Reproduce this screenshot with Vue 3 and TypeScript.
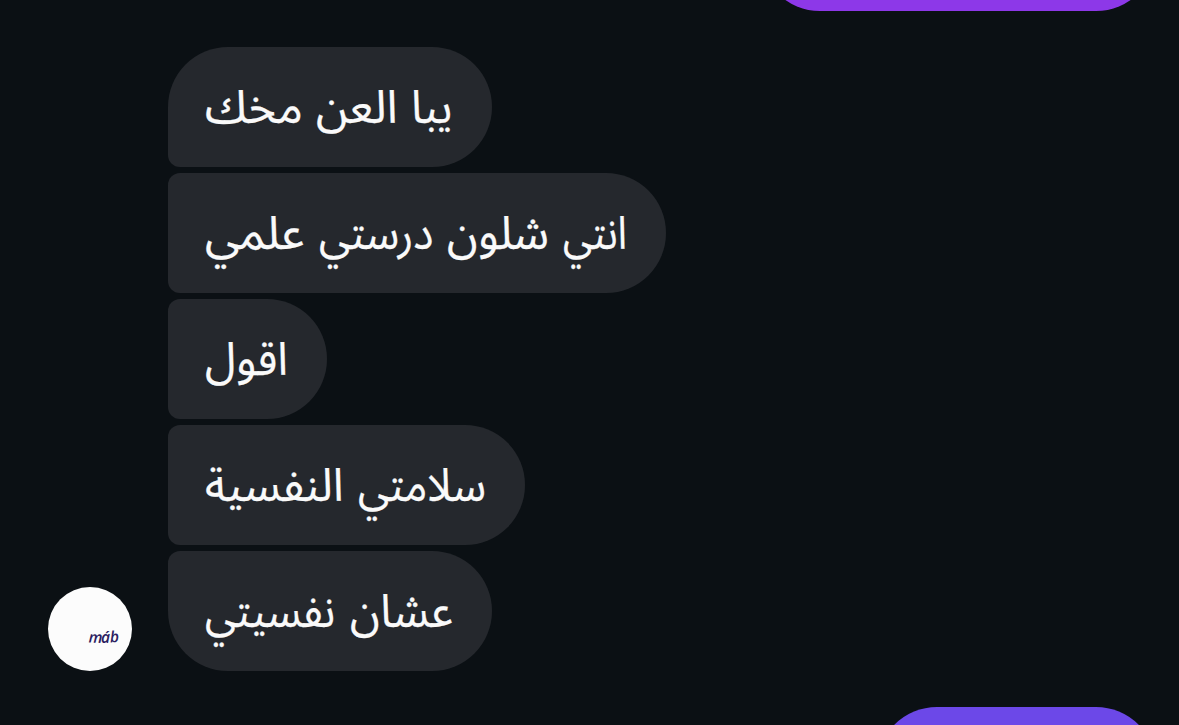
<script setup lang="ts">
interface Word { text: string; x: number; width: number }
interface Message { width: number; shape: 'first' | 'middle' | 'last'; words: Word[] }

// Words run right to left; x is the left edge of each word inside its bubble.
const messages: Message[] = [
  {
    width: 324,
    shape: 'first',
    words: [
      { text: 'يبا', x: 243, width: 41.5 },
      { text: 'العن', x: 148, width: 81.5 },
      { text: 'مخك', x: 37, width: 98 },
    ],
  },
  {
    width: 498,
    shape: 'middle',
    words: [
      { text: 'انتي', x: 395, width: 64 },
      { text: 'شلون', x: 279, width: 102 },
      { text: 'درستي', x: 151, width: 114.5 },
      { text: 'علمي', x: 37, width: 99.5 },
    ],
  },
  { width: 159, shape: 'middle', words: [{ text: 'اقول', x: 37, width: 83 }] },
  {
    width: 357,
    shape: 'middle',
    words: [
      { text: 'سلامتي', x: 190, width: 128 },
      { text: 'النفسية', x: 37, width: 138.5 },
    ],
  },
  {
    width: 324,
    shape: 'last',
    words: [
      { text: 'عشان', x: 182, width: 103 },
      { text: 'نفسيتي', x: 37, width: 130 },
    ],
  },
]
</script>

<template>
  <main class="chat">
    <div class="sent sent-top"></div>
    <section class="received">
      <svg class="avatar" viewBox="0 0 84 84">
        <circle cx="42" cy="42" r="42" fill="#fcfcfc" />
        <text class="signature" x="40.6 53 62.2" y="55.6 55.6 55.6" rotate="2 0 -4">máb</text>
      </svg>
      <div class="bubbles">
        <div v-for="(m, i) in messages" :key="i" class="bubble" :class="m.shape" :style="{ width: m.width + 'px' }">
          <svg class="line" :width="m.width" height="120">
            <text
              v-for="w in m.words"
              :key="w.text"
              class="word"
              :x="w.x + w.width"
              y="76"
              :textLength="w.width"
              lengthAdjust="spacingAndGlyphs"
            >{{ w.text }}</text>
          </svg>
        </div>
      </div>
    </section>
    <div class="sent sent-bottom"></div>
  </main>
</template>

<style scoped>
.chat {
  display: flex;
  flex-direction: column;
  box-sizing: border-box;
  width: 1179px;
  height: 725px;
  padding-right: 23px;
  overflow: hidden;
  background: #0b1014;
}
.sent {
  flex: none;
  align-self: flex-end;
  height: 120px;
  border-radius: 60px;
}
.sent-top {
  width: 396px;
  margin-top: -109px;
  background: #8d38e8;
}
.sent-bottom {
  width: 279px;
  background: #6c48e8;
}
.received {
  display: flex;
  flex: none;
  align-items: flex-end;
  gap: 36px;
  margin: 36px 0 36px 48px;
}
.avatar {
  flex: none;
  width: 84px;
  height: 84px;
}
.signature {
  fill: #2a2060;
  font: italic 600 15.5px 'Open Sans', sans-serif;
}
.bubbles {
  display: flex;
  flex-direction: column;
  gap: 6px;
}
.bubble {
  height: 120px;
  background: #25282d;
}
.first { border-radius: 60px 60px 60px 12px; }
.middle { border-radius: 12px 60px 60px 12px; }
.last { border-radius: 12px 60px 60px 60px; }
.line { display: block; }
.word {
  direction: rtl;
  fill: #fafafa;
  stroke: #fafafa;
  stroke-width: 0.25px;
  font: 400 46px 'Noto Sans Arabic', 'DejaVu Sans', sans-serif;
}
</style>
<style>
body { margin: 0; background: #0b1014; }
</style>
